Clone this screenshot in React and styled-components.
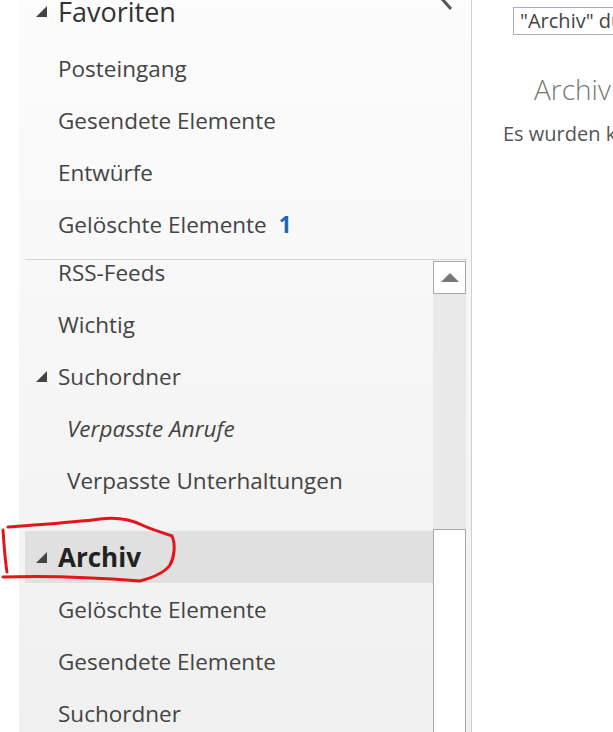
import React from 'react';
import styled, { createGlobalStyle } from 'styled-components';

const GlobalStyle = createGlobalStyle`
  html, body {
    margin: 0;
    padding: 0;
    background: #fff;
    overflow: hidden;
  }
  body {
    font-family: "Open Sans", "Noto Sans", "Liberation Sans", sans-serif;
  }
`;

const Shell = styled.div`
  position: relative;
  display: flex;
  width: 613px;
  height: 732px;
  overflow: hidden;
  background: #fff;
`;

const NavPanel = styled.nav`
  margin-left: 19px;
  width: 453px;
  flex-shrink: 0;
  box-sizing: border-box;
  padding-right: 4px;
  border-right: 1px solid #cfcfcf;
  background: linear-gradient(to bottom, #fcfcfc 0%, #f8f8f8 35%, #f0f0f0 100%);
  display: flex;
  flex-direction: column;
`;

const Header = styled.div`
  height: 42px;
  box-sizing: border-box;
  padding: 0 0 20px 17px;
  display: flex;
  align-items: center;
  flex-shrink: 0;
`;

const HeaderTitle = styled.span`
  flex: 1;
  font-size: 27px;
  line-height: 27px;
  color: #333;
  white-space: nowrap;
`;

const CollapseButton = styled.span`
  align-self: flex-start;
  margin-top: -10px;
  margin-right: 14px;
  display: flex;
`;

const ToggleSlot = styled.span`
  width: 22px;
  flex-shrink: 0;
  display: flex;
  align-items: center;
`;

const Row = styled.div`
  height: 52px;
  flex-shrink: 0;
  display: flex;
  align-items: center;
  box-sizing: border-box;
  padding-left: ${(p) => p.$indent}px;
  font-size: ${(p) => (p.$bold ? '26px' : '22.5px')};
  font-weight: ${(p) => (p.$bold ? 700 : 400)};
  font-style: ${(p) => (p.$italic ? 'italic' : 'normal')};
  color: ${(p) => (p.$bold ? '#222' : '#444')};
  background: ${(p) => (p.$selected ? '#e0e0e0' : 'transparent')};
  white-space: nowrap;
`;

const Count = styled.span`
  margin-left: 12px;
  color: #1e67b0;
  font-weight: 700;
`;

const ScrollArea = styled.div`
  flex: 1;
  min-height: 0;
  margin: 9px 0 0 6px;
  border-top: 1px solid #d4d4d4;
  display: flex;
`;

const ListViewport = styled.div`
  flex: 1;
  overflow: hidden;
`;

const ListInner = styled.div`
  margin-top: -14px;
  display: flex;
  flex-direction: column;
`;

const GroupGap = styled.div`
  height: 25px;
  flex-shrink: 0;
`;

const Scrollbar = styled.div`
  width: 34px;
  flex-shrink: 0;
  padding-top: 1px;
  box-sizing: border-box;
  background: #f3f3f3;
  display: flex;
  flex-direction: column;
`;

const ScrollButton = styled.div`
  width: 33px;
  height: 33px;
  box-sizing: border-box;
  border: 1px solid #a9a9a9;
  background: #fff;
  display: flex;
  align-items: center;
  justify-content: center;
`;

const Track = styled.div`
  width: 33px;
  height: 235px;
  background: #e9e9e9;
`;

const Thumb = styled.div`
  flex: 1;
  width: 33px;
  box-sizing: border-box;
  border: 1px solid #a9a9a9;
  border-bottom: none;
  background: #fff;
`;

const ContentPane = styled.main`
  flex: 1;
  min-width: 0;
  padding-top: 7px;
  display: flex;
  flex-direction: column;
`;

const SearchBox = styled.div`
  margin-left: 41px;
  width: 320px;
  height: 28px;
  box-sizing: border-box;
  border: 1px solid #a8adb8;
  padding-left: 6px;
  font-size: 20px;
  line-height: 26px;
  color: #444;
  white-space: nowrap;
`;

const FolderTitle = styled.div`
  margin-top: 40px;
  padding-left: 62px;
  font-size: 28px;
  font-weight: 300;
  line-height: 28px;
  color: #777;
  white-space: nowrap;
`;

const EmptyMessage = styled.div`
  margin-top: 21px;
  padding-left: 31px;
  font-size: 20px;
  line-height: 20px;
  color: #555;
  white-space: nowrap;
`;

const Markup = styled.svg`
  position: absolute;
  left: 0;
  top: 0;
  pointer-events: none;
`;

const ExpandedIcon = () => (
  <svg width="11" height="11" viewBox="0 0 11 11">
    <path d="M11 0 L11 11 L0 11 Z" fill="#444" />
  </svg>
);

const favorites = [
  { name: 'Posteingang' },
  { name: 'Gesendete Elemente' },
  { name: 'Entwürfe' },
  { name: 'Gelöschte Elemente', count: 1 },
];

const folders = [
  { name: 'RSS-Feeds' },
  { name: 'Wichtig' },
  { name: 'Suchordner', toggle: true },
  { name: 'Verpasste Anrufe', sub: true, italic: true },
  { name: 'Verpasste Unterhaltungen', sub: true },
  { gap: true },
  { name: 'Archiv', toggle: true, bold: true, selected: true },
  { name: 'Gelöschte Elemente' },
  { name: 'Gesendete Elemente' },
  { name: 'Suchordner' },
];

function FolderRow({ folder }) {
  const indent = folder.toggle ? 11 : folder.sub ? 42 : 33;
  return (
    <Row
      $indent={indent}
      $bold={folder.bold}
      $italic={folder.italic}
      $selected={folder.selected}
    >
      {folder.toggle && (
        <ToggleSlot>
          <ExpandedIcon />
        </ToggleSlot>
      )}
      {folder.name}
    </Row>
  );
}

export default function App() {
  return (
    <>
      <GlobalStyle />
      <Shell>
        <NavPanel>
          <Header>
            <ToggleSlot>
              <ExpandedIcon />
            </ToggleSlot>
            <HeaderTitle>Favoriten</HeaderTitle>
            <CollapseButton>
              <svg width="12" height="20" viewBox="0 0 12 20">
                <polyline
                  points="10,1 2,10 10,19"
                  fill="none"
                  stroke="#555"
                  strokeWidth="3"
                />
              </svg>
            </CollapseButton>
          </Header>

          {favorites.map((f) => (
            <Row key={f.name} $indent={39}>
              {f.name}
              {f.count && <Count>{f.count}</Count>}
            </Row>
          ))}

          <ScrollArea>
            <ListViewport>
              <ListInner>
                {folders.map((f, i) =>
                  f.gap ? <GroupGap key={i} /> : <FolderRow key={i} folder={f} />
                )}
              </ListInner>
            </ListViewport>
            <Scrollbar>
              <ScrollButton>
                <svg width="18" height="9" viewBox="0 0 18 9">
                  <polygon points="9,0 18,9 0,9" fill="#777" />
                </svg>
              </ScrollButton>
              <Track />
              <Thumb />
            </Scrollbar>
          </ScrollArea>
        </NavPanel>

        <ContentPane>
          <SearchBox>"Archiv" durchsuchen</SearchBox>
          <FolderTitle>Archiv</FolderTitle>
          <EmptyMessage>Es wurden keine Elemente gefunden.</EmptyMessage>
        </ContentPane>

        {/* red pen loop drawn around the Archiv folder */}
        <Markup width="613" height="732" viewBox="0 0 613 732">
          <path
            d="M8 527 C30 525 70 523 100 519 C115 517 130 519 142 525 C152 530 165 533 172 536 C176 545 174 558 170 565 C165 572 155 577 140 581 C115 579 60 575 3 577"
            fill="none"
            stroke="#e4141b"
            strokeWidth="3"
            strokeLinecap="round"
            strokeLinejoin="round"
          />
          <path
            d="M3 530 C4 545 5 560 7 572"
            fill="none"
            stroke="#e4141b"
            strokeWidth="3"
            strokeLinecap="round"
          />
        </Markup>
      </Shell>
    </>
  );
}
